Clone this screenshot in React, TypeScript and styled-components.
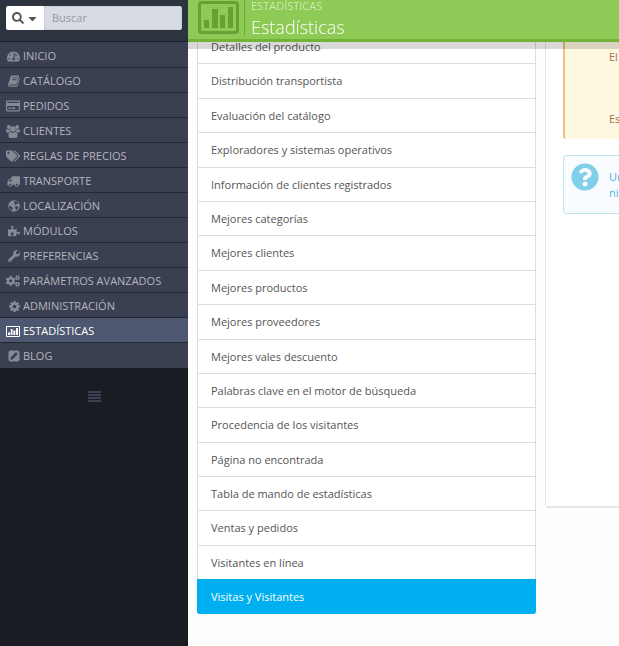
import React from "react";
import styled, { createGlobalStyle, css } from "styled-components";
import {
  FaTachometerAlt, FaRegCreditCard, FaTags, FaTruck,
  FaPuzzlePiece, FaWrench, FaCogs, FaSearch, FaCaretDown, FaQuestionCircle,
} from "react-icons/fa";

const GlobalStyle = createGlobalStyle`
  * { box-sizing: border-box; }
  body {
    margin: 0;
    background: #fefefe;
    font: 11px/1.4 "Open Sans", "Noto Sans", sans-serif;
    color: #555;
    overflow: hidden;
  }
`;

const Page = styled.div`
  display: flex;
  min-height: 100vh;
`;

const Sidebar = styled.aside`
  flex: 0 0 188px;
  min-width: 0;
  background: #1a1c23;
`;

const SearchBar = styled.form`
  display: flex;
  height: 42px;
  padding: 6px 6px 11px;
  background: #2e3340;
  border-bottom: 1px solid #1e212b;
`;

const SearchType = styled.button`
  display: flex;
  flex: 0 0 38px;
  align-items: center;
  justify-content: center;
  gap: 2px;
  padding: 0;
  border: 0;
  border-radius: 2px 0 0 2px;
  background: #fff;
  color: #555;
`;

const SearchInput = styled.input`
  flex: 1;
  width: 100%;
  min-width: 0;
  padding: 0 7px;
  border: 1px solid #ccd0d8;
  border-radius: 0 2px 2px 0;
  background: #d6dbe4;
  font: inherit;
  color: #555;
  &::placeholder { color: #999; opacity: 1; }
`;

const Menu = styled.ul`
  margin: 0;
  padding: 1px 0;
  background: #3a3f51;
  list-style: none;
`;

const MenuItem = styled.li`
  & + & { border-top: 1px solid #242833; }
`;

const MenuLink = styled.a<{ $active?: boolean }>`
  display: flex;
  align-items: center;
  gap: 3px;
  height: 24px;
  padding: 4px 0 2px 6px;
  color: #b3b6bd;
  font-size: 11px;
  line-height: 18px;
  text-decoration: none;
  text-transform: uppercase;
  white-space: nowrap;
  ${(p) => p.$active && css`
    background: #4d576f;
    color: #fff;
  `}
`;

const MenuIcon = styled.span<{ $active?: boolean; $flip?: boolean }>`
  display: flex;
  justify-content: flex-end;
  width: 14px;
  color: ${(p) => (p.$active ? "#fff" : "#868a95")};
  svg { display: block; transform: ${(p) => (p.$flip ? "scaleX(-1)" : "none")}; }
`;

const Collapse = styled.button`
  display: block;
  margin: 23px auto 0;
  padding: 0;
  border: 0;
  background: none;
  color: #3a3f51;
  svg { display: block; }
`;

const Main = styled.main`
  flex: 1;
  min-width: 0;
  overflow: hidden;
`;

const Header = styled.header`
  position: fixed;
  top: 0;
  left: 188px;
  right: 0;
  display: flex;
  height: 42px;
  padding-left: 9px;
  background: #8eca56;
  border-bottom: 3px solid #72b236;
  box-shadow: 0 7px 0 rgba(0, 0, 0, 0.15);
`;

const HeaderIcon = styled.div`
  height: 36px;
  padding-right: 5px;
  border-right: 1px solid #6fa83a;
  color: #67a033;
  svg { display: block; }
`;

const HeaderText = styled.div`
  padding-left: 6px;
`;

const Crumb = styled.div`
  height: 14px;
  line-height: 12px;
  color: #cdeab0;
  text-transform: uppercase;
`;

const Title = styled.h1`
  margin: 0;
  font-size: 18px;
  font-weight: 300;
  line-height: 26px;
  color: #fff;
`;

const Content = styled.div`
  display: flex;
  align-items: flex-start;
  gap: 9px;
  padding: 29px 0 32px 9px;
`;

const StatList = styled.nav`
  flex: 0 0 339px;
`;

const StatLink = styled.a<{ $active?: boolean }>`
  display: block;
  padding: 9px 13px;
  border: 1px solid #ddd;
  border-bottom: 0;
  background: #fff;
  color: #555;
  text-decoration: none;
  ${(p) => p.$active && css`
    border-color: #00aff0;
    border-radius: 0 0 3px 3px;
    background: #00aff0;
    color: #fff;
  `}
`;

const Panel = styled.section`
  flex: 1 0 120px;
  height: 479px;
  padding-left: 17px;
  border: 1px solid #e6e6e6;
  border-width: 0 0 2px 1px;
  border-radius: 0 0 0 4px;
  background: #fff;
  white-space: nowrap;
`;

const Warning = styled.div`
  display: grid;
  gap: 46px;
  padding: 20px 0 12px 44px;
  border-left: 2px solid #f3c07c;
  border-radius: 0 0 0 3px;
  background: #fff8e1;
  color: #a6754f;
  p { margin: 0; line-height: 16px; }
`;

const Help = styled.div`
  display: flex;
  gap: 10px;
  margin-top: 16px;
  padding: 7px 0 12px 7px;
  border: 1px solid #bfe4f1;
  border-radius: 3px;
  background: #f8fcff;
  color: #4ab5e0;
  svg { flex: none; color: #81cfe8; }
  p { margin: 6px 0 0; line-height: 16px; }
`;

function ChartIcon() {
  return (
    <svg width="14" height="11" viewBox="0 0 14 11" fill="currentColor">
      <path fillRule="evenodd" d="M1 0h12a1 1 0 0 1 1 1v9a1 1 0 0 1-1 1H1a1 1 0 0 1-1-1V1a1 1 0 0 1 1-1zM1 1v9h12V1z" />
      <path d="M2 6.500h2V9H2zM4.700 3h1.800v6H4.700zM7.300 4.500h2V9h-2zM10 2h2v7h-2z" />
    </svg>
  );
}

function BookIcon() {
  return (
    <svg width="12" height="12" viewBox="0 0 12 12" fill="currentColor">
      <path d="M4 0.500h6.300q1 0 .7 1L8.800 8.700q-.3.900-1.200.9H1.900q-.6 0-.7.400 0 .6.900.6h6.300q.5 0 .7-.5l2.200-7.200q.9.400.6 1.300L9.800 10.600q-.4 1.200-1.500 1.200H1.900Q.4 11.800.1 10.300q-.2-.6.1-1.400L2.600 1.700Q2.900.5 4 .5z" />
      <path d="M4.600 2.800h4.600M4 4.700h4.600" stroke="#3a3f51" strokeWidth=".8" />
    </svg>
  );
}

function UsersIcon() {
  return (
    <svg width="14" height="13" viewBox="0 0 14 13" fill="currentColor">
      <circle cx="2.800" cy="2" r="1.900" />
      <circle cx="11.200" cy="2" r="1.900" />
      <circle cx="7" cy="4" r="2.800" />
      <path d="M1 4q1.700 1 2.800.2Q3.900 5.600 4.700 6.500 3.400 6.600 2.700 7.500H1.400Q0 7.500 0 6.200 0 4 1 4zM13 4q-1.700 1-2.800.2-.1 1.400-.9 2.300 1.300.1 2 1h1.300q1.400 0 1.400-1.300Q14 4 13 4z" />
      <path d="M4.500 7q2.500 1.600 5 0 2.100 0 2.100 3.800 0 2.200-2 2.200H4.400q-2 0-2-2.200Q2.400 7 4.500 7z" />
    </svg>
  );
}

function GlobeIcon() {
  return (
    <svg width="12" height="12" viewBox="0 0 12 12" fill="currentColor">
      <circle cx="6" cy="6" r="5.800" />
      <path fill="#3a3f51" d="M6.200 1.100 8.800 1.600 10.300 3.400 9.300 4.200 8.200 4.100 7.200 5.200 6.300 4.500 7 3.300 6 2.600zM7.600 6.200 9.600 6.300 10.500 7.200 8.500 10.200 7.600 9.800 7.500 8.200 6.800 7.400zM1.200 5.200 2.300 6.300 3.900 7 4.900 8 4.200 9.300 4.200 10.700 2.100 9.300 1.100 7.300z" />
    </svg>
  );
}

function CogIcon() {
  return (
    <svg width="11" height="11" viewBox="128 128 1536 1536" fill="currentColor">
      <path d="M1152 896q0-106-75-181t-181-75-181 75-75 181 75 181 181 75 181-75 75-181zm512-109v222q0 12-8 23t-20 13l-185 28q-19 54-39 91 35 50 107 138 10 12 10 25t-9 23q-27 37-99 108t-94 71q-12 0-26-9l-138-108q-44 23-91 38-16 136-29 186-7 28-36 28h-222q-14 0-24.500-8.500t-11.500-21.500l-28-184q-49-16-90-37l-141 107q-10 9-25 9-14 0-25-11-126-114-165-168-7-10-7-23 0-12 8-23 15-21 51-66.500t54-70.500q-27-50-41-99l-183-27q-13-2-21-12.500t-8-23.500v-222q0-12 8-23t19-13l186-28q14-46 39-92-40-57-107-138-10-12-10-24 0-10 9-23 26-36 98.500-107.500t94.500-71.500q13 0 26 10l138 107q44-23 91-38 16-136 29-186 7-28 36-28h222q14 0 24.500 8.500t11.500 21.500l28 184q49 16 90 37l142-107q9-9 24-9 13 0 25 10 129 119 165 170 7 8 7 22 0 12-8 23-15 21-51 66.500t-54 70.500q26 50 41 98l183 28q13 2 21 12.500t8 23.500z" />
    </svg>
  );
}

function PencilSquareIcon() {
  return (
    <svg width="12" height="12" viewBox="0 0 12 12" fill="currentColor">
      <rect x="0.500" y="0.500" width="11" height="11" rx="2" />
      <path fill="#3a3f51" d="M2.600 7.400 7.400 2.600q.5-.5 1 0l1 1q.5.5 0 1L4.600 9.400h-2z" />
    </svg>
  );
}

function BarsIcon() {
  return (
    <svg width="13" height="12" viewBox="0 0 13 12" fill="currentColor">
      <path d="M0 0h13v2H0zM0 3h13v2H0zM0 6h13v2H0zM0 9h13v2H0z" />
    </svg>
  );
}

function HeaderChart() {
  return (
    <svg width="42" height="35" viewBox="0 0 42 35" fill="currentColor">
      <rect x="2.500" y="2.500" width="38" height="30" rx="2" fill="none" stroke="currentColor" strokeWidth="3" />
      <path d="M7 20h5v8H7zM15 9h6v19h-6zM23 15h5v13h-5zM31 7h5v21h-5z" />
    </svg>
  );
}

const menu = [
  { label: "Inicio", icon: <FaTachometerAlt size={13} /> },
  { label: "Catálogo", icon: <BookIcon /> },
  { label: "Pedidos", icon: <FaRegCreditCard size={14} /> },
  { label: "Clientes", icon: <UsersIcon /> },
  { label: "Reglas de precios", icon: <FaTags size={14} /> },
  { label: "Transporte", icon: <FaTruck size={13} />, flip: true },
  { label: "Localización", icon: <GlobeIcon /> },
  { label: "Módulos", icon: <FaPuzzlePiece size={12} /> },
  { label: "Preferencias", icon: <FaWrench size={12} /> },
  { label: "Parámetros Avanzados", icon: <FaCogs size={14} /> },
  { label: "Administración", icon: <CogIcon /> },
  { label: "Estadísticas", icon: <ChartIcon />, active: true },
  { label: "Blog", icon: <PencilSquareIcon /> },
];

const stats = [
  "Detalles del producto", "Distribución transportista", "Evaluación del catálogo",
  "Exploradores y sistemas operativos", "Información de clientes registrados", "Mejores categorías",
  "Mejores clientes", "Mejores productos", "Mejores proveedores", "Mejores vales descuento",
  "Palabras clave en el motor de búsqueda", "Procedencia de los visitantes", "Página no encontrada",
  "Tabla de mando de estadísticas", "Ventas y pedidos", "Visitantes en línea", "Visitas y Visitantes",
];

export default function App() {
  return (
    <Page>
      <GlobalStyle />
      <Sidebar>
        <SearchBar>
          <SearchType type="button" aria-label="Tipo de búsqueda">
            <FaSearch size={12} />
            <FaCaretDown size={13} />
          </SearchType>
          <SearchInput type="text" placeholder="Buscar" aria-label="Buscar" />
        </SearchBar>
        <Menu>
          {menu.map((m) => (
            <MenuItem key={m.label}>
              <MenuLink href="#" $active={m.active}>
                <MenuIcon $active={m.active} $flip={m.flip}>{m.icon}</MenuIcon>
                {m.label}
              </MenuLink>
            </MenuItem>
          ))}
        </Menu>
        <Collapse type="button" aria-label="Contraer menú"><BarsIcon /></Collapse>
      </Sidebar>
      <Main>
        <Header>
          <HeaderIcon><HeaderChart /></HeaderIcon>
          <HeaderText>
            <Crumb>Estadísticas</Crumb>
            <Title>Estadísticas</Title>
          </HeaderText>
        </Header>
        <Content>
          <StatList>
            {stats.map((s, i) => (
              <StatLink key={s} href="#" $active={i === stats.length - 1}>{s}</StatLink>
            ))}
          </StatList>
          <Panel>
            <Warning>
              <p>El</p>
              <p>Es</p>
            </Warning>
            <Help>
              <FaQuestionCircle size={28} />
              <p>Un<br />ni</p>
            </Help>
          </Panel>
        </Content>
      </Main>
    </Page>
  );
}
